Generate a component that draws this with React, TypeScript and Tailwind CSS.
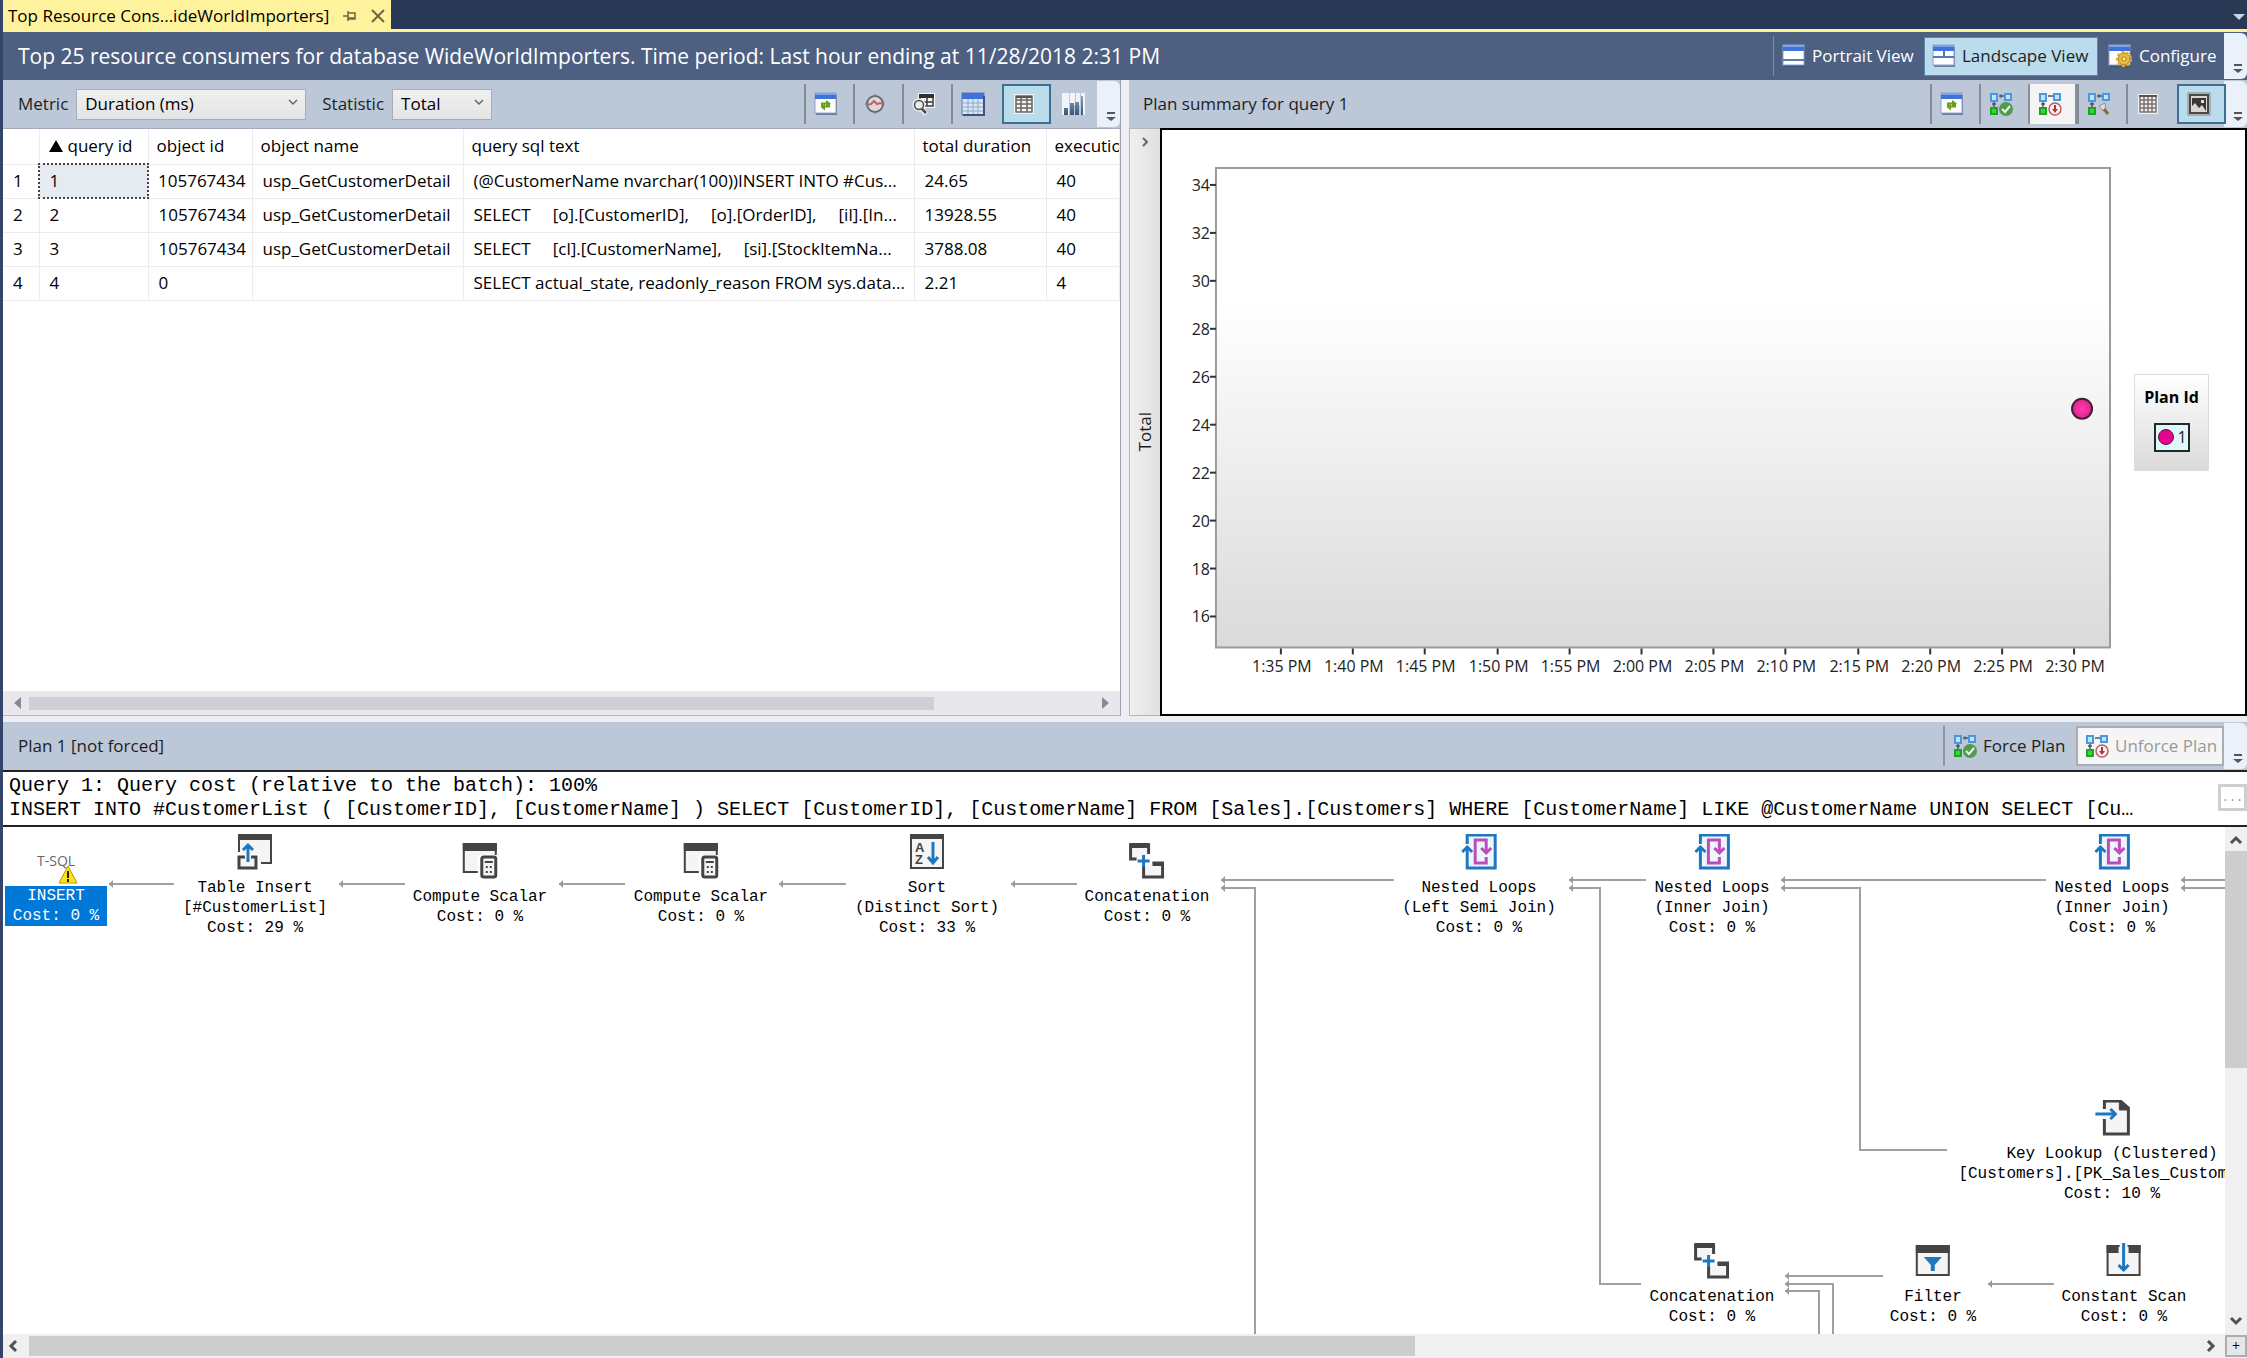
import type { ReactNode } from "react";

const COLUMNS = ["", "query id", "object id", "object name", "query sql text", "total duration", "execution count"];

const ROWS = [
  ["1", "105767434", "usp_GetCustomerDetail", "(@CustomerName nvarchar(100))INSERT INTO #Cus...", "24.65", "40"],
  ["2", "105767434", "usp_GetCustomerDetail", "SELECT     [o].[CustomerID],     [o].[OrderID],     [il].[In...", "13928.55", "40"],
  ["3", "105767434", "usp_GetCustomerDetail", "SELECT     [cl].[CustomerName],     [si].[StockItemNa...", "3788.08", "40"],
  ["4", "0", "", "SELECT actual_state, readonly_reason FROM sys.data...", "2.21", "4"],
];

const Y_TICKS = [34, 32, 30, 28, 26, 24, 22, 20, 18, 16];
const X_TICKS = [
  "1:35 PM", "1:40 PM", "1:45 PM", "1:50 PM", "1:55 PM", "2:00 PM",
  "2:05 PM", "2:10 PM", "2:15 PM", "2:20 PM", "2:25 PM", "2:30 PM",
];

// x is the centre of the node, y the top of its icon
const NODES = [
  { x: 252, y: 7, icon: "insert", lines: ["Table Insert", "[#CustomerList]", "Cost: 29 %"] },
  { x: 477, y: 16, icon: "scalar", lines: ["Compute Scalar", "Cost: 0 %"] },
  { x: 698, y: 16, icon: "scalar", lines: ["Compute Scalar", "Cost: 0 %"] },
  { x: 924, y: 7, icon: "sort", lines: ["Sort", "(Distinct Sort)", "Cost: 33 %"] },
  { x: 1144, y: 16, icon: "concat", lines: ["Concatenation", "Cost: 0 %"] },
  { x: 1476, y: 7, icon: "loops", lines: ["Nested Loops", "(Left Semi Join)", "Cost: 0 %"] },
  { x: 1709, y: 7, icon: "loops", lines: ["Nested Loops", "(Inner Join)", "Cost: 0 %"] },
  { x: 2109, y: 7, icon: "loops", lines: ["Nested Loops", "(Inner Join)", "Cost: 0 %"] },
  { x: 2109, y: 273, icon: "lookup", lines: ["Key Lookup (Clustered)", "[Customers].[PK_Sales_Customers]", "Cost: 10 %"] },
  { x: 1709, y: 416, icon: "concat", lines: ["Concatenation", "Cost: 0 %"] },
  { x: 1930, y: 416, icon: "filter", lines: ["Filter", "Cost: 0 %"] },
  { x: 2121, y: 416, icon: "scan", lines: ["Constant Scan", "Cost: 0 %"] },
];

// every path starts at its arrow head
const EDGES = [
  "M106 57H171",
  "M336 57H402",
  "M556 57H622",
  "M776 57H843",
  "M1008 57H1074",
  "M1218 53H1391",
  "M1218 61H1252V508",
  "M1566 53H1643",
  "M1566 61H1597V457H1638",
  "M1778 53H2043",
  "M1778 61H1857V323H1944",
  "M2178 53H2222",
  "M2178 61H2222",
  "M1782 449H1880",
  "M1782 457H1830V508",
  "M1782 464H1816V508",
  "M1985 457H2051",
];

function WindowFrame({ children }: { children?: ReactNode }) {
  return (
    <svg width="24" height="24" viewBox="0 0 24 24" aria-hidden="true">
      <rect x="2" y="3" width="21" height="20" fill="#33466b" opacity="0.6" />
      <rect x="1" y="1" width="21" height="20" fill="#fdfdff" stroke="#8ea4cf" />
      <rect x="1" y="1" width="21" height="6" fill="#3f72dc" />
      <rect x="1" y="1" width="21" height="2" fill="#7ba2ee" />
      {children}
    </svg>
  );
}

function PortraitIcon() {
  return (
    <WindowFrame>
      <path d="M1 16h21" stroke="#5a78b0" strokeWidth="2" />
    </WindowFrame>
  );
}

function LandscapeIcon() {
  return (
    <WindowFrame>
      <path d="M1 13h21M12 7v6" stroke="#5a78b0" strokeWidth="2" />
    </WindowFrame>
  );
}

function ConfigureIcon() {
  return (
    <WindowFrame>
      <circle cx="16" cy="15" r="6" fill="#e8b93a" stroke="#b58417" />
      <circle cx="16" cy="15" r="7" fill="none" stroke="#e0ac2b" strokeWidth="2" strokeDasharray="3 2" />
      <circle cx="16" cy="15" r="2" fill="#fff3c4" stroke="#b58417" />
    </WindowFrame>
  );
}

function RefreshIcon() {
  return (
    <WindowFrame>
      <path d="M8 14V11.500H13M15 11v3.500H10" fill="none" stroke="#6a9e1c" strokeWidth="2" />
      <path d="M12 8l5 3.500-5 3.500zM11 11.500v7L6.500 15z" fill="#6a9e1c" />
    </WindowFrame>
  );
}

function TrackIcon() {
  return (
    <svg width="24" height="24" viewBox="0 0 24 24" aria-hidden="true">
      <circle cx="12" cy="12" r="8" fill="#d9d9de" stroke="#6a6a6a" strokeWidth="2" />
      <path d="M2 12h3M19 12h3M12 2v3M12 19v3" stroke="#777" />
      <path d="M4 13l4-1 3-3 3 3 3-1 3 1" fill="none" stroke="#c9606a" strokeWidth="2" />
    </svg>
  );
}

function SearchGridIcon() {
  return (
    <svg width="24" height="24" viewBox="0 0 24 24" aria-hidden="true">
      <rect x="6" y="1" width="17" height="15" fill="#f4f4f4" />
      <path d="M8 3h13v11H8zM15 6v8M8 10h13" fill="none" stroke="#3c3c3c" strokeWidth="1.5" />
      <rect x="7" y="2" width="15" height="4" fill="#2f2f2f" />
      <path d="M10 17l4 5" stroke="#f4f4f4" strokeWidth="5" />
      <circle cx="7" cy="13" r="4.500" fill="#dfe3ea" stroke="#f4f4f4" strokeWidth="4" />
      <circle cx="7" cy="13" r="4.500" fill="#e8ebf0" stroke="#4a4a4a" strokeWidth="1.500" />
      <path d="M10 17l4 4" stroke="#4a4a4a" strokeWidth="2.500" />
    </svg>
  );
}

function BlueGridIcon() {
  return (
    <svg width="24" height="24" viewBox="0 0 24 24" aria-hidden="true">
      <rect x="1" y="1" width="22" height="22" fill="#dbe6f5" stroke="#5c78a8" />
      <rect x="1" y="1" width="22" height="6" fill="#3f72dc" />
      <path d="M1 11h22M1 15h22M1 19h22M7 7v16M12 7v16M17 7v16" stroke="#8ea6cc" />
      <path d="M23 4v19H2" fill="none" stroke="#3f5578" strokeWidth="2" />
    </svg>
  );
}

function DetailGridIcon() {
  return (
    <svg width="24" height="24" viewBox="0 0 24 24" aria-hidden="true">
      <rect x="2" y="2" width="20" height="20" fill="#f4f1ee" />
      <path d="M4 4h16v16H4zM4 8h16M4 12h16M4 16h16M9 4v16M15 4v16" fill="none" stroke="#6a6664" strokeWidth="1.5" />
      <path d="M4 5h16" stroke="#555" strokeWidth="2" />
    </svg>
  );
}

function BarsIcon() {
  return (
    <svg width="24" height="24" viewBox="0 0 24 24" aria-hidden="true">
      <defs>
        <linearGradient id="bar" x1="0" y1="0" x2="0" y2="1">
          <stop offset="0" stopColor="#8fa6bd" />
          <stop offset="1" stopColor="#34567c" />
        </linearGradient>
      </defs>
      <path d="M1 1h7v22H1zM9 1h5v12H9zM15 1h4v12h-4zM20 1h4v22h-4z" fill="#f2f4f8" />
      <path d="M3 16h4v7H3zM9 11h4v12H9zM14 10h4v13h-4zM20 4h2v19h-2z" fill="url(#bar)" />
    </svg>
  );
}

function GridIcon() {
  return (
    <svg width="24" height="24" viewBox="0 0 24 24" aria-hidden="true">
      <rect x="2" y="2" width="20" height="20" fill="#f4f1ee" />
      <path d="M4 4h16v16H4zM4 8h16M4 12h16M4 16h16M8 4v16M12 4v16M16 4v16" fill="none" stroke="#77726f" strokeWidth="1.5" />
      <path d="M3 4h18" stroke="#555" strokeWidth="2" />
    </svg>
  );
}

function PictureIcon() {
  return (
    <svg width="24" height="24" viewBox="0 0 24 24" aria-hidden="true">
      <rect x="1" y="1" width="22" height="22" fill="#d5d2d0" stroke="#8a8785" />
      <rect x="3" y="3" width="18" height="18" fill="#d9d6d4" stroke="#4a4846" strokeWidth="2" />
      <path d="M5 14V6h14v13l-4-6-3 3-4-5z" fill="#3a3836" />
      <path d="M14 8h3v3h-3z" fill="#e4e0dd" />
    </svg>
  );
}

function PlanIcon({ kind }: { kind: "force" | "unforce" | "compare" }) {
  return (
    <svg width="24" height="24" viewBox="0 0 24 24" className="shrink-0" aria-hidden="true">
      <rect x="2" y="2" width="6" height="7" fill="#c4e4fc" stroke="#4b98e0" strokeWidth="2" />
      <rect x="16" y="2" width="6" height="6" fill="#c4e4fc" stroke="#4b98e0" strokeWidth="2" />
      <path d="M10 4h5M5 10v5M3 12h4" stroke="#4a5568" strokeWidth="1.5" />
      {kind !== "unforce" && <path d="M12 2v4" stroke="#4a5568" />}
      <rect x="2" y="16" width="6" height="6" fill="#37d637" stroke="#1fa324" strokeWidth="2" />
      {kind === "force" && (
        <>
          <circle cx="17" cy="17" r="7" fill="#549a4c" />
          <path d="M13 17l3 3 5-6" fill="none" stroke="#e9f5e6" strokeWidth="2" />
        </>
      )}
      {kind === "unforce" && (
        <>
          <circle cx="17" cy="17" r="6" fill="#faf2f2" stroke="#c25a5e" strokeWidth="1.5" />
          <path d="M17 13v4" stroke="#b0353a" strokeWidth="2" />
          <path d="M14 17h6l-3 4z" fill="#b0353a" />
        </>
      )}
      {kind === "compare" && (
        <>
          <path d="M12 14l6-3 1 7-3 1z" fill="#dcdfe4" stroke="#8b8f96" />
          <path d="M17 17l4 5" stroke="#8a6b35" strokeWidth="3" />
        </>
      )}
    </svg>
  );
}

function NodeIcon({ name }: { name: string }) {
  const dark = "#444444";
  const blue = "#1f77c0";
  return (
    <svg width="36" height="36" viewBox="0 0 36 36" className="shrink-0" aria-hidden="true">
      {name === "insert" && (
        <>
          <path d="M2 18V1h32v28H24" fill="#f5f5f5" stroke={dark} strokeWidth="2" />
          <rect x="1" y="0" width="34" height="6" fill={dark} />
          <rect x="0" y="20" width="22" height="16" fill="#fff" />
          <path d="M8 23H2v11h17V23h-5" fill="#f5f5f5" stroke={dark} strokeWidth="3" />
          <path d="M11 28V11M6 16l5-5 5 5" fill="none" stroke={blue} strokeWidth="3" />
        </>
      )}
      {name === "scalar" && (
        <>
          <rect x="2" y="1" width="32" height="28" fill="#f5f5f5" stroke={dark} strokeWidth="2" />
          <rect x="1" y="0" width="34" height="8" fill={dark} />
          <rect x="16" y="12" width="20" height="24" fill="#fff" />
          <rect x="20" y="14" width="14" height="20" rx="2" fill="#f5f5f5" stroke={dark} strokeWidth="3" />
          <path d="M23 19h8" stroke={dark} strokeWidth="2" />
          <path d="M24 24h2M28 24h2M24 29h2M28 29h2" stroke={dark} strokeWidth="2" />
        </>
      )}
      {name === "sort" && (
        <>
          <rect x="2" y="1" width="32" height="33" fill="#f5f5f5" stroke={dark} strokeWidth="2" />
          <rect x="1" y="0" width="34" height="5" fill={dark} />
          <text x="6" y="18" fontSize="13" fontWeight="700" fill={dark} fontFamily="Liberation Sans, sans-serif">A</text>
          <text x="6" y="30" fontSize="13" fontWeight="700" fill={dark} fontFamily="Liberation Sans, sans-serif">Z</text>
          <path d="M24 8v20M19 23l5 6 5-6" fill="none" stroke={blue} strokeWidth="3" />
        </>
      )}
      {name === "concat" && (
        <>
          <path d="M8 16H2V2h18v9" fill="#f5f5f5" stroke={dark} strokeWidth="3" />
          <rect x="1" y="0" width="20" height="5" fill={dark} />
          <path d="M15 24v10h19V20H24" fill="#f5f5f5" stroke={dark} strokeWidth="3" />
          <path d="M24 21h11" stroke={dark} strokeWidth="4" />
          <path d="M15 12v12M9 18h12" stroke={blue} strokeWidth="3" />
        </>
      )}
      {name === "loops" && (
        <>
          <path d="M6 10V1h28v33H6V14" fill="#eef6fd" stroke={blue} strokeWidth="3" />
          <path d="M1 18l5-5 5 5" fill="none" stroke={blue} strokeWidth="3" />
          <path d="M25 23v6H14V6h11v11" fill="none" stroke="#bb4dbd" strokeWidth="3" />
          <path d="M20 14l5 5 5-5" fill="none" stroke="#bb4dbd" strokeWidth="3" />
        </>
      )}
      {name === "lookup" && (
        <>
          <path d="M10 9V1h16l8 7v26H10V19" fill="#f5f5f5" stroke={dark} strokeWidth="3" />
          <path d="M25 1l9 9h-9z" fill={dark} stroke={dark} />
          <path d="M1 14h19M16 9l5 5-5 5" fill="none" stroke={blue} strokeWidth="3" />
        </>
      )}
      {name === "filter" && (
        <>
          <rect x="2" y="3" width="32" height="29" fill="#f5f5f5" stroke={dark} strokeWidth="2" />
          <rect x="1" y="2" width="34" height="8" fill={dark} />
          <path d="M9 14h18l-7 8v6h-4v-6z" fill={blue} />
        </>
      )}
      {name === "scan" && (
        <>
          <rect x="2" y="3" width="32" height="29" fill="#f5f5f5" stroke={dark} strokeWidth="2" />
          <path d="M1 2h12v8H1zM23 2h12v8H23z" fill={dark} />
          <path d="M14 0h8v10h-8z" fill="#f5f5f5" />
          <path d="M18 0v27M13 22l5 5 5-5" fill="none" stroke={blue} strokeWidth="3" />
        </>
      )}
    </svg>
  );
}

function ToolButton({ label, state, children }: { label: string; state?: "active" | "light"; children: ReactNode }) {
  const look =
    state === "active"
      ? "relative ml-0.5 w-[49px] border-2 border-[#3b6f96] bg-[#bbdcec]"
      : state === "light"
        ? "w-[49px] border-x-2 border-[#8b919b] bg-[#f5f4f4]"
        : "w-[49px] border-l-2 border-[#838b99]";
  return (
    <button aria-label={label} className={`flex h-10 shrink-0 items-center pl-2 ${look}`}>
      {children}
    </button>
  );
}

function Overflow() {
  return (
    <button aria-label="Toolbar options" className="flex h-[46px] w-[23px] shrink-0 items-end justify-end rounded-r-md bg-[#eaf1fb] pb-1 pr-[3px]">
      <svg width="12" height="12" viewBox="0 0 12 12" aria-hidden="true">
        <path d="M2 2h8" stroke="#555" strokeWidth="2" />
        <path d="M1 6h10l-5 4z" fill="#555" />
      </svg>
    </button>
  );
}

function Select({ id, options, className }: { id: string; options: string[]; className: string }) {
  return (
    <div className={`relative ${className}`}>
      <select
        id={id}
        className="h-[31px] w-full appearance-none border border-[#a9adb5] bg-[linear-gradient(#f0f0f0,#e4e4e4)] pl-2 pr-6 text-black"
      >
        {options.map((o) => (
          <option key={o}>{o}</option>
        ))}
      </select>
      <svg width="10" height="8" viewBox="0 0 10 8" className="pointer-events-none absolute right-2 top-2.5" aria-hidden="true">
        <path d="M1 1l4 4 4-4" fill="none" stroke="#666" strokeWidth="1.5" />
      </svg>
    </div>
  );
}

function QueryGrid() {
  return (
    <section className="flex flex-col border-r border-[#9aa3b3] bg-white">
      <div className="flex h-12 items-center bg-[#bcc7d8] pl-[15px]">
        <label htmlFor="metric" className="mr-2">Metric</label>
        <Select id="metric" options={["Duration (ms)"]} className="mr-4 w-[230px]" />
        <label htmlFor="statistic" className="mr-2">Statistic</label>
        <Select id="statistic" options={["Total"]} className="w-[100px]" />
        <div className="ml-auto flex items-center">
          <ToolButton label="Refresh"><RefreshIcon /></ToolButton>
          <ToolButton label="Track query"><TrackIcon /></ToolButton>
          <ToolButton label="View query text"><SearchGridIcon /></ToolButton>
          <ToolButton label="Grid"><BlueGridIcon /></ToolButton>
          <ToolButton label="Detailed grid" state="active"><DetailGridIcon /></ToolButton>
          <button aria-label="Chart" className="flex h-10 w-[46px] items-center pl-2.5"><BarsIcon /></button>
          <Overflow />
        </div>
      </div>
      <div className="flex-1 overflow-hidden border-t border-[#a4abb8]">
        <table className="w-full table-fixed border-collapse whitespace-nowrap text-left text-black">
          <colgroup>
            <col className="w-9" />
            <col className="w-[109px]" />
            <col className="w-[104px]" />
            <col className="w-[211px]" />
            <col className="w-[451px]" />
            <col className="w-[132px]" />
            <col />
          </colgroup>
          <thead>
            <tr className="h-[35px]">
              {COLUMNS.map((c, i) => (
                <th key={i} className="overflow-hidden border-b border-r border-[#ececec] pl-2 font-normal">
                  {i === 1 ? (
                    <span className="flex items-center gap-1">
                      <svg width="16" height="14" viewBox="0 0 16 14" aria-hidden="true"><path d="M8 1l7 12H1z" /></svg>
                      {c}
                    </span>
                  ) : c}
                </th>
              ))}
            </tr>
          </thead>
          <tbody>
            {ROWS.map((row, r) => (
              <tr key={r} className="h-[34px]">
                <td className="border-b border-r border-[#ececec] pl-2.5">{r + 1}</td>
                {row.map((cell, i) => (
                  <td
                    key={i}
                    className={
                      r === 0 && i === 0
                        ? "bg-[#e6ebf1] pl-2.5 outline-2 -outline-offset-1 outline-dotted outline-[#444]"
                        : "overflow-hidden whitespace-pre border-b border-r border-[#ececec] pl-2.5"
                    }
                  >
                    {cell}
                  </td>
                ))}
              </tr>
            ))}
          </tbody>
        </table>
      </div>
      <div className="flex h-[25px] items-center gap-1.5 border-b border-[#b4b8c0] bg-[#e8e8ec] px-2">
        <svg width="12" height="12" viewBox="0 0 12 12" aria-hidden="true"><path d="M10 0v12L3 6z" fill="#868999" /></svg>
        <div className="flex-1">
          <div className="h-[13px] w-[85%] bg-[#cfd0d6]" />
        </div>
        <svg width="12" height="12" viewBox="0 0 12 12" aria-hidden="true"><path d="M2 0v12l7-6z" fill="#868999" /></svg>
      </div>
    </section>
  );
}

function PlanChart() {
  return (
    <svg viewBox="0 0 973 585" className="min-w-0 flex-1 text-base" role="img" aria-label="Plan duration over time">
      <defs>
        <linearGradient id="plot" x1="0" y1="0" x2="0" y2="1">
          <stop offset="0.28" stopColor="#ffffff" />
          <stop offset="1" stopColor="#dadada" />
        </linearGradient>
        <radialGradient id="point">
          <stop offset="0" stopColor="#f540a8" />
          <stop offset="1" stopColor="#e81f92" />
        </radialGradient>
      </defs>
      <rect x="54" y="38" width="895" height="480" fill="url(#plot)" stroke="#9b9b9b" strokeWidth="2" />
      {Y_TICKS.map((t, i) => (
        <g key={t}>
          <path d={`M48 ${55 + i * 48}h6`} stroke="#333" strokeWidth="2" />
          <text x="48" y={61 + i * 48} textAnchor="end" fill="#222">{t}</text>
        </g>
      ))}
      {X_TICKS.map((t, i) => (
        <g key={t}>
          <path d={`M${Math.round(119 + i * 72.2)} 519v6`} stroke="#333" strokeWidth="2" />
          <text x={Math.round(120 + i * 72.2)} y="543" textAnchor="middle" fill="#222">{t}</text>
        </g>
      ))}
      <circle cx="921" cy="279" r="10" fill="url(#point)" stroke="#3d2236" strokeWidth="2" />
    </svg>
  );
}

function PlanSummary() {
  return (
    <section className="flex flex-col">
      <div className="flex h-12 items-center bg-[#bcc7d8] pl-3.5">
        <h2>Plan summary for query 1</h2>
        <div className="ml-auto flex items-center">
          <ToolButton label="Refresh"><RefreshIcon /></ToolButton>
          <ToolButton label="Force plan"><PlanIcon kind="force" /></ToolButton>
          <ToolButton label="Unforce plan" state="light"><PlanIcon kind="unforce" /></ToolButton>
          <ToolButton label="Compare plans"><PlanIcon kind="compare" /></ToolButton>
          <ToolButton label="Grid"><GridIcon /></ToolButton>
          <ToolButton label="Chart" state="active"><PictureIcon /></ToolButton>
          <div className="-ml-0.5">
            <Overflow />
          </div>
        </div>
      </div>
      <div className="flex flex-1">
        <div className="flex w-[31px] flex-col items-center border border-r-0 border-[#b5b5b5] bg-[linear-gradient(90deg,#f0f0f0,#e0e0e0)] pt-2">
          <svg width="8" height="10" viewBox="0 0 8 10" aria-hidden="true">
            <path d="M2 1l4 4-4 4" fill="none" stroke="#666" strokeWidth="2" />
          </svg>
          <div className="flex flex-1 items-center">
            <span className="rotate-180 [writing-mode:vertical-rl]">Total</span>
          </div>
        </div>
        <div className="flex flex-1 items-center border-2 border-black bg-white">
          <PlanChart />
          <div className="mr-9 flex h-[97px] w-[75px] shrink-0 flex-col items-center gap-3.5 border border-[#dcdcdc] bg-[linear-gradient(#fff,#dadada)] pt-2.5 text-base">
            <span className="font-bold text-black">Plan Id</span>
            <span className="flex h-[29px] w-9 items-center gap-1 border-2 border-[#1d2b2b] bg-[#dff8fa] pl-0.5">
              <span className="size-4 rounded-full border border-[#5c1040] bg-[#e8048c]" />
              1
            </span>
          </div>
        </div>
      </div>
    </section>
  );
}

function PlanCanvas() {
  return (
    <div className="relative min-h-[507px] flex-1 overflow-hidden bg-white font-['Liberation_Mono',monospace] text-base leading-5 text-black">
      <svg className="absolute left-0 top-0 h-[507px] w-full" aria-hidden="true">
        <defs>
          <marker id="head" markerUnits="userSpaceOnUse" markerWidth="8" markerHeight="10" refX="1" refY="5">
            <path d="M1 5l4-4v8z" fill="#9a9a9a" />
          </marker>
        </defs>
        {EDGES.map((d) => (
          <path key={d} d={d} fill="none" stroke="#a0a0a0" strokeWidth="2" markerStart="url(#head)" />
        ))}
      </svg>
      <div className="absolute left-0.5 top-6 flex w-[102px] flex-col items-center">
        <div className="relative h-[35px] w-full pl-8 font-['Open_Sans',sans-serif] text-sm text-[#666]">
          T-SQL
          <svg width="20" height="20" viewBox="0 0 20 20" className="absolute left-[53px] top-3.5" aria-hidden="true">
            <path d="M10 1l9 17H1z" fill="#ffe11a" stroke="#b89b00" />
            <path d="M10 6v7M10 14v3" stroke="#222" strokeWidth="2" />
          </svg>
        </div>
        <div className="w-full bg-[#0078d7] text-center text-white">
          <div>INSERT</div>
          <div>Cost: 0 %</div>
        </div>
      </div>
      {NODES.map((n, i) => (
        <div
          key={i}
          className="absolute flex -translate-x-1/2 flex-col items-center whitespace-pre"
          style={{ left: n.x, top: n.y }}
        >
          <NodeIcon name={n.icon} />
          <div className="mt-2 text-center">
            {n.lines.map((line) => (
              <div key={line}>{line}</div>
            ))}
          </div>
        </div>
      ))}
    </div>
  );
}

function Chevron({ d }: { d: string }) {
  return (
    <svg width="14" height="14" viewBox="0 0 14 14" aria-hidden="true">
      <path d={d} fill="none" stroke="#505050" strokeWidth="3" />
    </svg>
  );
}

export default function App() {
  return (
    <div className="flex min-h-screen flex-col border-l-3 border-[#34446a] bg-[#eeeef2] font-['Open_Sans',sans-serif] text-[17px] leading-6 text-[#1e1e1e]">
      <div className="flex h-8 items-start justify-between border-b-3 border-[#fff29d] bg-[#293955]">
        <div className="flex h-8 w-[388px] items-center gap-3.5 whitespace-nowrap bg-[#fff29d] pl-[5px] text-black">
          <span>Top Resource Cons...ideWorldImporters]</span>
          <button aria-label="Pin" className="ml-auto shrink-0">
            <svg width="14" height="12" viewBox="0 0 14 12" aria-hidden="true">
              <path d="M0 6h5M5 1v10M5 3h7v6H5M5 8h7" fill="none" stroke="#75633d" strokeWidth="1.5" />
            </svg>
          </button>
          <button aria-label="Close" className="mr-2 shrink-0">
            <svg width="14" height="14" viewBox="0 0 14 14" aria-hidden="true">
              <path d="M1 1l12 12M13 1L1 13" stroke="#75633d" strokeWidth="2" />
            </svg>
          </button>
        </div>
        <button aria-label="Window list" className="mr-0.5 mt-3.5">
          <svg width="12" height="6" viewBox="0 0 12 6" aria-hidden="true"><path d="M0 0h12L6 6z" fill="#ced4dd" /></svg>
        </button>
      </div>

      <header className="flex h-12 items-center bg-[#4d6082] pl-[15px] text-white">
        <h1 className="text-[21px]">
          Top 25 resource consumers for database WideWorldImporters. Time period: Last hour ending at 11/28/2018 2:31 PM
        </h1>
        <div className="ml-auto flex shrink-0 items-center">
          <button className="flex h-10 w-[151px] items-center gap-1.5 border-l border-[#7f8ca5] pl-2">
            <PortraitIcon />
            Portrait View
          </button>
          <button className="flex h-[39px] w-[174px] items-center gap-1.5 border border-[#5c86ad] bg-[#bbdcec] pl-[7px] text-[#1e1e1e]">
            <LandscapeIcon />
            Landscape View
          </button>
          <button className="flex h-10 w-[126px] items-center gap-[7px] pl-2.5">
            <ConfigureIcon />
            Configure
          </button>
          <Overflow />
        </div>
      </header>

      <main className="grid h-[635px] grid-cols-[minmax(0,1fr)_8px_minmax(0,1fr)]">
        <QueryGrid />
        <div className="bg-[#eeeef2]" />
        <PlanSummary />
      </main>

      <section className="mt-[7px] flex flex-1 flex-col">
        <div className="flex h-12 items-center bg-[#bcc7d8] pl-[15px]">
          <h2>Plan 1 [not forced]</h2>
          <div className="ml-auto flex items-center">
            <button className="flex h-10 w-[133px] items-center gap-1.5 border-l-2 border-[#8b95a5] pl-2">
              <PlanIcon kind="force" />
              Force Plan
            </button>
            <button disabled className="flex h-10 w-[148px] items-center gap-1.5 whitespace-nowrap border-2 border-[#a9adb5] bg-[#f5f5f5] pl-[7px] text-[#999]">
              <PlanIcon kind="unforce" />
              Unforce Plan
            </button>
            <Overflow />
          </div>
        </div>
        <div className="flex h-[57px] items-start justify-between border-y-2 border-[#222] bg-white pl-1.5 font-['Liberation_Mono',monospace] text-xl leading-6 text-black">
          <div className="whitespace-pre pt-0.5">
            <div>Query 1: Query cost (relative to the batch): 100%</div>
            <div>INSERT INTO #CustomerList ( [CustomerID], [CustomerName] ) SELECT [CustomerID], [CustomerName] FROM [Sales].[Customers] WHERE [CustomerName] LIKE @CustomerName UNION SELECT [Cu…</div>
          </div>
          <button aria-label="Show full query" className="mt-3 flex h-[27px] w-[29px] items-center justify-center border-3 border-[#cfcfcf] bg-white text-xs text-[#999]">
            ...
          </button>
        </div>
        <div className="flex flex-1">
          <PlanCanvas />
          <div className="flex w-[22px] flex-col items-center bg-[#f0f0f0] pt-1.5">
            <Chevron d="M2 10l5-5 5 5" />
            <div className="mt-1 h-[217px] w-full bg-[#cdcdcd]" />
            <div className="mb-1.5 mt-auto">
              <Chevron d="M2 4l5 5 5-5" />
            </div>
          </div>
        </div>
        <div className="flex h-6 items-center bg-[#f0f0f0] pl-1">
          <Chevron d="M9 2L4 7l5 5" />
          <div className="mx-2 flex-1">
            <div className="h-5 w-[64%] bg-[#cdcdcd]" />
          </div>
          <Chevron d="M5 2l5 5-5 5" />
          <button aria-label="Zoom" className="ml-2 flex size-[22px] items-center justify-center border-2 border-[#adadad] bg-[#e6e6e6] text-sm text-black">
            +
          </button>
        </div>
      </section>
    </div>
  );
}
